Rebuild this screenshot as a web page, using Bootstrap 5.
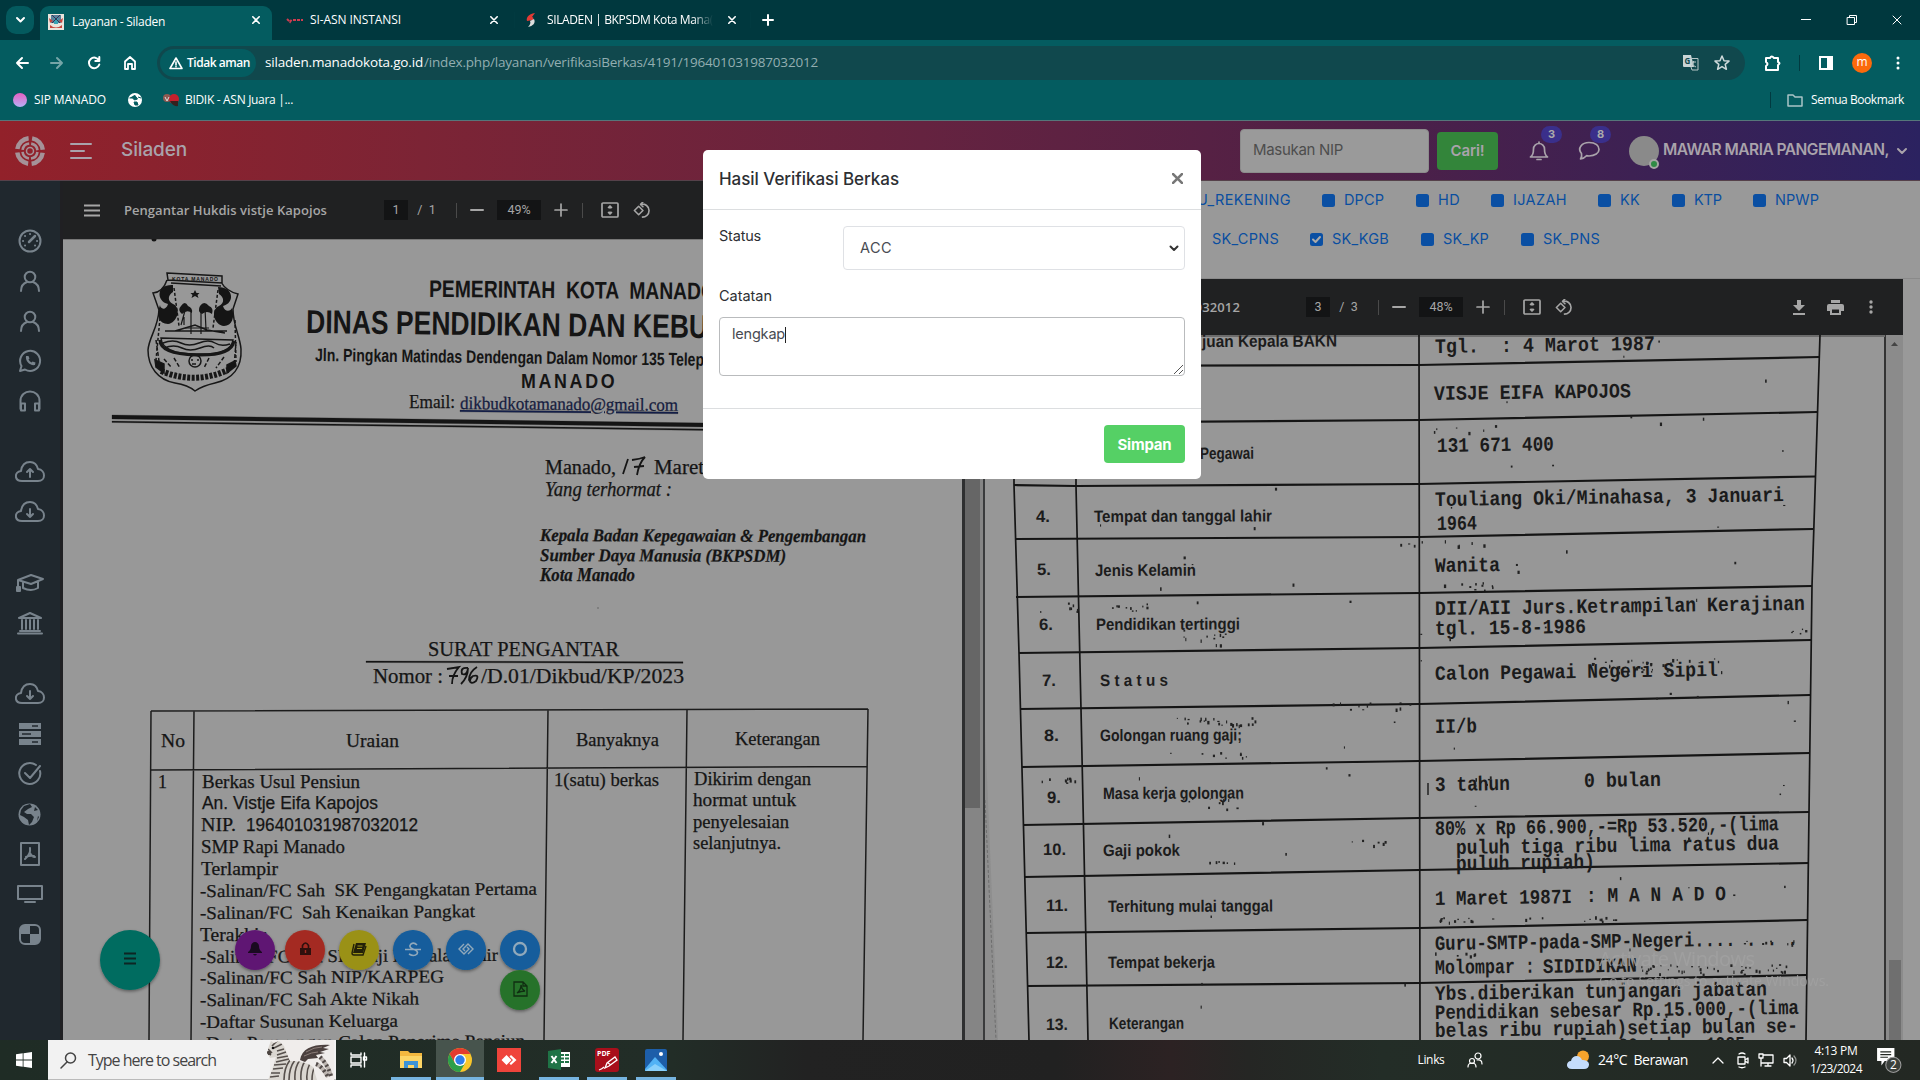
<!DOCTYPE html>
<html lang="id">
<head>
<meta charset="utf-8">
<title>Layanan - Siladen</title>
<link href="https://cdn.jsdelivr.net/npm/bootstrap@5.3.0/dist/css/bootstrap.min.css" rel="stylesheet">
<style>
html,body{width:1920px;height:1080px;overflow:hidden;margin:0}
body{font-family:"Open Sans","Noto Sans",sans-serif;font-size:12px;line-height:1;background:#999;color:#fff}
svg{display:block;overflow:visible}
.ico{fill:none;stroke:currentColor;stroke-width:2;stroke-linecap:round;stroke-linejoin:round}
.gridbar{display:grid;align-items:center;justify-items:center}
.fitw{white-space:nowrap;justify-self:start}
.dlbox{width:1px;height:16px;background:#013a40}
/* browser window */
.tabstrip{height:40px;background:#00383e;grid-template-columns:40px 232px 14px 18px 178px 24px 16px 18px 180px 24px 13px 22px 1fr 48px 44px 46px}
.drop{width:28px;height:28px;border-radius:10px;background:#045a5e;margin-left:0}
.tab-on{width:232px;height:34px;align-self:end;background:#045c60;border-radius:9px 9px 0 0;grid-template-columns:32px 168px 32px;padding-bottom:2px}
.toolbar{height:45px;background:#045c60;grid-template-columns:5px 34px 36px 38px 34px 10px 1588px 48px 12px 42px 30px 42px}
.addr{height:34px;width:1588px;border-radius:17px;background:#10484d;grid-template-columns:3px 96px 9px 160px 400px 1fr 32px 32px 7px}
.chip{width:96px;height:28px;border-radius:14px;background:#045c60;grid-template-columns:27px 1fr}
.marks{height:35px;padding-bottom:5px;background:#045c60;grid-template-columns:6px 28px 78px 46px 25px 2px 1fr 18px 32px 109px}
.avt{width:20px;height:20px;border-radius:50%;background:#fb6a0c;display:grid;place-items:center;padding-bottom:2px}
/* application */
.apphead{height:61px;border-top:1px solid #56767a;border-bottom:1px solid #55414a;background:linear-gradient(90deg,#92212a 0,#7c2435 22%,#652340 48%,#4f2046 70%,#2b2260 100%);font-family:Inter,sans-serif;color:#a9a3ab;grid-template-columns:60px 61px 1119px 189px 8px 61px 21px 40px 10px 40px 20px 30px 4px 226px 26px}
.nip{width:189px;height:44px;background:#9a9a9a;border:1px solid #8c8c8c;border-radius:4px;color:#4d4d4d;font-size:15px;padding:12px}
.cari{width:61px;height:38px;background:#33853a;border-radius:4px;font-size:15px;font-weight:600}
.nbadge{position:absolute;left:12px;top:-15px;width:21px;height:17px;border-radius:9px;background:#3a2f8b;font-size:11px;font-weight:700;display:grid;place-items:center;color:#aaa}
.face{width:30px;height:30px;border-radius:50%;background:#8a8a8a;position:relative}
.face i{position:absolute;right:0;bottom:-3px;width:10px;height:10px;border-radius:50%;background:#2f8a45;border:2px solid #a5a5a5}
.work{height:859px}
.side{width:63px;background:linear-gradient(90deg,#20282e 60px,#202023 60px);padding:40px 4px 0 0;color:#78838c}
.side div{height:40px;display:grid;place-items:center}
.side .gap1{margin-top:31px}
.pdfbar{background:#202122;color:#a6a6a6;font-size:12.5px;font-family:Roboto,sans-serif}
.barL{width:899px;height:58px;grid-template-columns:61px 260px 24px 37px 22px 20px 64px 20px 22px 34px 28px 1fr}
.barR{width:918px;height:56px;grid-template-columns:255px 66px 24px 37px 22px 20px 64px 20px 22px 34px 28px 1fr 36px 36px 36px 14px}
.pg{background:#131415;width:24px;height:20px;display:grid;place-items:center}
.zm{background:#131415;width:44px;height:20px;display:grid;place-items:center}
.vl{width:1px;height:15px;background:#4a4a4a}
.ttl{font-weight:600;font-size:13px;font-family:"Open Sans",sans-serif}
.paneL{width:899px}
.gutter{width:23px;background:#858585;border-left:3px solid #2e2f30;border-right:2px solid #3a3b3c;padding-right:3px}
.thumb{width:15px;height:627px;background:#666}
.files{height:98px;background:#999;border-bottom:1px solid #8a8a8a;color:#0a4ea0;font-family:Inter,sans-serif;font-size:14.5px;padding-top:12px}
.rowA{grid-template-columns:181px 156px 22px 72px 22px 53px 22px 85px 22px 52px 22px 59px 22px 60px;justify-content:start;height:14px;margin-bottom:25px}
.rowB{grid-template-columns:227px 83px 15px 22px 89px 22px 78px 22px 60px;justify-content:start;height:14px}
.cb{width:13px;height:13px;border-radius:2.5px;background:#0a4fa3;justify-self:start}
/* dialog */
.dlg{position:absolute;left:703px;top:150px;width:498px;height:329px;background:#fff;border-radius:5px;font-family:Inter,sans-serif;color:#2d2f33;border:0}
.dlg .hd{height:60px;border-bottom:1px solid #dcdee0;padding:0 17px 0 16px}
.dlg .hd .fitw{font-size:17px;font-weight:500}
.dlg .bd{height:198px;padding:16px 16px 0;font-size:14.5px}
.selbox{width:342px;height:44px;border:1px solid #dfe1e5;border-radius:4px;padding:0 5px 0 16px;color:#484b52}
.txt{height:59px;border:1px solid #b9bbbd;border-radius:4px;padding:9px 12px;position:relative;color:#484b52}
.caret{width:1px;height:16px;background:#222}
.ft{height:71px;border-top:1px solid #dcdee0;padding:16px}
.save{width:81px;height:38px;border-radius:4px;background:#55d065;color:#fff;font-weight:700;font-size:15px}
.fabs{position:absolute;left:100px;top:925px}
/* taskbar */
.task{height:40px;background:linear-gradient(90deg,#1f2c25 0,#222d27 35%,#222 42%,#212121 55%,#2c2223 61%,#252624 65%,#232d27 72%,#232823 100%);grid-template-columns:48px 288px 46px 9px 40px 5px 48px 5px 40px 10px 40px 8px 40px 9px 40px 727px 56px 34px 68px 36px 106px 26px 23px 24px 20px 68px 46px}
.find{width:288px;height:40px;background:#f2f2f2;color:#444;display:grid;grid-template-columns:40px 170px 8px 70px;align-items:center;border-bottom:1px solid #bbb}
.app{width:100%;height:40px;display:grid;place-items:center;border-bottom:3px solid #76b4e0;padding-top:2px}
.app.off{border-color:transparent}
.app.on{background:#47544d}
.clk{font-size:12px;text-align:center;line-height:18px;margin-left:12px}
/* scanned pages */
.sr{font-family:"Liberation Serif",serif;font-size:18px;stroke:#151515;stroke-width:.25px}
.hv{font-family:"Liberation Sans",sans-serif;font-weight:700}
.lb{font-family:"Liberation Sans",sans-serif;font-size:16.5px;font-weight:700;fill:#1c1c1c}
.tw{font-family:"Liberation Mono",monospace;font-size:20.5px;font-weight:700;fill:#1b1b1b}
</style>
<script src="https://cdn.jsdelivr.net/npm/bootstrap@5.3.0/dist/js/bootstrap.bundle.min.js"></script>
</head>
<body class="d-flex flex-column">
<svg width="0" height="0" class="position-absolute">
<defs>
<symbol id="x" viewBox="0 0 10 10"><path d="M1 1l8 8M9 1l-8 8"/></symbol>
<symbol id="user" viewBox="0 0 20 22"><circle cx="10" cy="7" r="5.3"/><path d="M1 21c0-5 3-8 6-9M19 21c0-5-3-8-6-9"/></symbol>
<symbol id="cloud" viewBox="0 0 30 22"><path d="M7 20c-8 0-8-9-1-10C7 3 11 1 15 1s7 3 8 7c8 1 8 12 0 12z"/></symbol>
<symbol id="fit" viewBox="0 0 18 16"><rect x="1" y="1" width="16" height="14" rx="1"/><path d="M9 4.500v1.500M9 10v1.500M7.500 5.500L9 4l1.500 1.500M7.500 10.500L9 12l1.500-1.500"/></symbol>
<symbol id="rot" viewBox="0 0 18 18"><path d="M6 4.500L1.500 9 6 13.500 10.500 9zM8 2.500c5-1 9 2 9 6.500s-3.500 7-7 7M10.500 0L8 2.500 10.500 5"/></symbol>
</defs></svg>

<header>
 <div class="gridbar tabstrip">
  <div class="drop d-grid" style="place-items:center"><svg class="ico" width="9" height="6" viewBox="0 0 9 6"><path d="M1 1l3.500 3.500L8 1"/></svg></div>
  <div class="gridbar tab-on">
   <svg width="16" height="16" viewBox="0 0 16 16"><path fill="#e9e4dc" d="M0 0h16v16H0z"/><path fill="#5a7f9a" d="M3 1h10v8H3z"/><path fill="#c8453c" d="M1 4l4 3-3 2zM15 4l-4 3 3 2zM2 11q6 5 12 0v3H2z"/><path fill="#3aa2b4" d="M6 4h4v6H6z"/><path d="M4 1l8 8M12 1L4 9" stroke="#335"/></svg>
   <span class="fitw" data-w="93">Layanan - Siladen</span>
   <svg class="ico" width="8" height="8" style="margin-top:-4px"><use href="#x"/></svg>
  </div>
  <span></span>
  <svg width="16" height="5"><path d="M0 1l3 3 2-3M6 2h10" stroke="#d03c50" stroke-width="2" stroke-dasharray="3 1" fill="none"/></svg>
  <span class="fitw ps-1" data-w="91" style="margin-left:2px">SI-ASN INSTANSI</span>
  <svg class="ico" width="8" height="8"><use href="#x"/></svg>
  <span class="dlbox"></span>
  <svg width="12" height="16" viewBox="0 0 12 16"><path d="M10 1C3 2 1 6 2 9l6-1c1-2 0-3-1-3z" fill="#e33b35"/><path d="M3 15c5-1 8-4 6-8L5 9c1 2 0 4-2 6z" fill="#ddd"/></svg>
  <span class="fitw" data-w="166" style="margin-left:7px;-webkit-mask:linear-gradient(90deg,#000 88%,transparent)">SILADEN | BKPSDM Kota Mana(</span>
  <svg class="ico" width="8" height="8"><use href="#x"/></svg>
  <span class="dlbox"></span>
  <svg class="ico" width="10" height="10"><path d="M5 0v10M0 5h10"/></svg>
  <span></span>
  <svg width="10" height="2"><path fill="#fff" d="M0 0h10v1H0z"/></svg>
  <svg class="ico" width="10" height="10" style="stroke-width:1"><path d="M.5 2.500h7v7h-7zM2.500 2.500v-2h7v7h-2"/></svg>
  <svg class="ico" width="10" height="10" style="stroke-width:1"><use href="#x"/></svg>
 </div>
 <div class="gridbar toolbar">
  <span></span>
  <svg class="ico" width="12" height="12"><path d="M12 6H1M6 1L1 6l5 5"/></svg>
  <svg class="ico" width="12" height="12" opacity=".45"><path d="M0 6h11M6 1l5 5-5 5"/></svg>
  <svg class="ico" width="12" height="12"><path d="M11 3.500A5.300 5.300 0 1 0 11.300 7.500M11.300 0v4h-4"/></svg>
  <svg class="ico" width="12" height="14" style="stroke-width:1.800"><path d="M1 5.500L6 1l5 4.500V13H8V8H4v5H1z"/></svg>
  <span></span>
  <div class="gridbar addr">
   <span></span>
   <div class="gridbar chip"><svg class="ico ms-1" width="14" height="12" style="stroke-width:1.600"><path d="M7 1l6 10.500H1zM7 5v3M7 9.500v.3"/></svg><span class="fitw fw-semibold" data-w="63">Tidak aman</span></div>
   <span></span>
   <span class="fitw" data-w="158" style="font-size:13.500px">siladen.manadokota.go.id</span>
   <span class="fitw" data-w="394" style="font-size:13.500px;color:#93aeb1;margin-left:-1px">/index.php/layanan/verifikasiBerkas/4191/196401031987032012</span>
   <span></span>
   <svg width="17" height="17" viewBox="0 0 17 17"><path fill="#c9d5d6" d="M1 1h8l3 12H2q-1 0-1-1z"/><path d="M7 4.500h9v11.500H10l-1-3" fill="none" stroke="#b5c5c6"/><text x="2.500" y="9.500" font-size="8" font-weight="700" fill="#10484d">G</text><path d="M9 8h5M11.500 7v1q0 3-2.500 4M10 9q1 3 4 4" stroke="#b5c5c6" fill="none"/></svg>
   <svg class="ico" width="16" height="15" viewBox="0 0 16 15" style="stroke-width:1.500;color:#cfdadb"><path d="M8 1l2 4.700 5 .4-3.800 3.300 1.200 4.900L8 11.600l-4.400 2.700 1.200-4.900L1 6.100l5-.4z"/></svg>
   <span></span>
  </div>
  <svg class="ico" width="16" height="16" style="margin-left:8px"><path d="M1 3h4q1.500-3 4 0h4v4q3 1 0 3v5H1v-4q3-2 0-4z"/></svg>
  <span class="dlbox"></span>
  <svg width="14" height="14"><path d="M1 1h12v12H1z" fill="none" stroke="#fff" stroke-width="2"/><path d="M8 1h5v12H8z" fill="#fff"/></svg>
  <span class="avt">m</span>
  <svg width="4" height="14" fill="#fff"><circle cx="2" cy="2" r="1.500"/><circle cx="2" cy="7" r="1.500"/><circle cx="2" cy="12" r="1.500"/></svg>
 </div>
 <div class="gridbar marks">
  <span></span>
  <svg width="14" height="14"><defs><linearGradient id="pk" x2="0" y2="1"><stop stop-color="#e55fc2"/><stop offset="1" stop-color="#b7b0f5"/></linearGradient></defs><circle cx="7" cy="7" r="7" fill="url(#pk)"/></svg>
  <span class="fitw" data-w="72">SIP MANADO</span>
  <svg width="14" height="14"><circle cx="7" cy="7" r="7" fill="#fff"/><path d="M1.500 5h3l2 2 3-1-3-4M6 9h3l1 3-3 0zM10 4l3 1" stroke="#045c60" fill="#045c60"/></svg>
  <svg width="16" height="14"><circle cx="4" cy="5" r="4" fill="#8d5a52"/><circle cx="11" cy="6" r="5" fill="#c4202c"/><path d="M7 8h8v5q-5 1-8-5z" fill="#33211f"/><path d="M2 4l2 4 2-4" stroke="#ddd" fill="none"/></svg>
  <span></span>
  <span class="fitw" data-w="108">BIDIK - ASN Juara |...</span>
  <span class="dlbox"></span>
  <svg class="ico" width="16" height="13" style="stroke-width:1.500;color:#a9c4c6"><path d="M1 1h5l2 2h7v9H1z"/></svg>
  <span class="fitw" data-w="93">Semua Bookmark</span>
 </div>
</header>

<nav class="gridbar apphead">
 <svg width="30" height="30" viewBox="-15 -15 30 30" fill="none" stroke="#a59298"><circle r="12.800" stroke-width="4.500" stroke-dasharray="16.500 3.600" stroke-dashoffset="-1.800"/><circle r="7.500" stroke-width="2.600" stroke-dasharray="9.700 2.080" stroke-dashoffset="-1"/><circle r="3.500" stroke-width="1.500"/></svg>
 <svg class="ico" width="22" height="18" style="margin-left:-20px"><path d="M1 2h20M1 9h13M1 16h20"/></svg>
 <span class="fitw fw-medium" data-w="66" style="font-size:19px;margin-top:-3px">Siladen</span>
 <div class="nip"><span class="fitw d-inline-block" data-w="90">Masukan NIP</span></div>
 <span></span>
 <div class="cari d-flex align-items-center justify-content-center"><span class="fitw" data-w="34">Cari!</span></div>
 <span></span>
 <div class="position-relative"><svg class="ico" width="20" height="20" viewBox="0 0 20 20" style="stroke-width:1.700"><path d="M1.500 16c3-2 3-5 3-8S7 2.500 10 2.500 15.500 5 15.500 8s0 6 3 8zM10 1v1M8 18.500h4"/></svg><span class="nbadge">3</span></div>
 <span></span>
 <div class="position-relative"><svg class="ico" width="22" height="19" viewBox="0 0 22 19" style="stroke-width:1.700"><path d="M3.500 12.500C-1 7 4 1.500 11 1.500S21 5 21 8.500 17 15 11 15l-2.500-.3Q6 17.500 2.500 18q1.700-2 1-5.500z"/></svg><span class="nbadge">8</span></div>
 <span></span>
 <div class="face"><i></i></div>
 <span></span>
 <span class="fitw fw-semibold" data-w="226" style="font-size:15.500px;margin-top:-1px">MAWAR MARIA PANGEMANAN,</span>
 <svg class="ico" width="10" height="6"><path d="M1 1l4 4 4-4"/></svg>
</nav>

<main class="d-flex work">
 <aside class="side">
  <div><svg class="ico" width="24" height="24" viewBox="0 0 24 24"><circle cx="12" cy="12" r="10.500"/><path d="M11 13l6-6" stroke-width="2.500"/><path d="M5 12h.1M7 7h.1M12 5h.1M19 12h.1M7 16.500h.1M17 16.500h.1"/></svg></div>
  <div><svg class="ico" width="20" height="22"><use href="#user"/></svg></div>
  <div><svg class="ico" width="20" height="22"><use href="#user"/></svg></div>
  <div><svg class="ico" width="24" height="24"><path d="M2 22l1.500-5A10 10 0 1 1 7 20.500z"/><path d="M8 7c-1 5 4 10 9 9l.500-2.500-3-1-1 1q-2-1-3-3l1-1-1-2.500z" fill="currentColor" stroke="none"/></svg></div>
  <div><svg class="ico" width="22" height="22"><path d="M1.500 19v-8C1.500 5 6 1.500 11 1.500S20.500 5 20.500 11v8M2 13.500h4v7H2zM16 13.500h4v7h-4z"/></svg></div>
  <div class="gap1"><svg class="ico" width="30" height="22"><use href="#cloud"/><path d="M15 16V8M12 11l3-3 3 3"/></svg></div>
  <div><svg class="ico" width="30" height="22"><use href="#cloud"/><path d="M15 8v8M12 13l3 3 3-3"/></svg></div>
  <div class="gap1"><svg class="ico" width="28" height="20"><path d="M2 7l13-5 12 4-12 5zM7 9v6q8 4 15 0V8M2 7v10" /><path d="M1 14h3v4H1z"/></svg></div>
  <div><svg class="ico" width="26" height="24"><path d="M2 7l11-5 11 5zM3 20h20M1 22.500h24M5 9v9M9 9v9M13 9v9M17 9v9M21 9v9"/></svg></div>
  <div class="gap1"><svg class="ico" width="30" height="22"><use href="#cloud"/><path d="M15 8v8M12 13l3 3 3-3"/></svg></div>
  <div><svg width="22" height="22" fill="currentColor"><path d="M0 0h22v6H0zM0 8h22v6H0zM0 16h22v6H0z"/><path d="M13 3h6M3 11h9M13 19h6" stroke="#20282e" stroke-width="1.500"/></svg></div>
  <div><svg class="ico" width="24" height="24"><path d="M22 9a10.500 10.500 0 1 1-4-6M7 11l5 5L22 4"/></svg></div>
  <div><svg width="23" height="23"><circle cx="11.500" cy="11.500" r="11" fill="currentColor"/><path d="M12 1l2 3-4 2-4 3 3 2 4 0 3 3-2 5-3 3-1-5-4-3-4-2 1-5 3-4zM17 4l3 3-4 1zM20 13l1 1-2 4z" fill="#20282e"/></svg></div>
  <div><svg class="ico" width="20" height="24"><path d="M1 1h18v22H1zM10 6q1 6-5 11M10 11q2 4 5 4M6 15q4-2 8-1"/></svg></div>
  <div><svg class="ico" width="26" height="18"><path d="M1 1h24v13H1zM8 17h10"/></svg></div>
  <div><svg width="22" height="21"><rect x="1" y="1" width="20" height="19" rx="5" fill="none" stroke="currentColor" stroke-width="2"/><path d="M6 1h5v9H1V6q0-5 5-5zM11 10h10v5q0 5-5 5h-5z" fill="currentColor"/></svg></div>
 </aside>

 <section class="paneL">
  <div class="gridbar pdfbar barL">
   <svg class="ico me-1" width="16" height="13" style="stroke-linecap:butt"><path d="M0 1.500h16M0 6.500h16M0 11.500h16"/></svg>
   <span class="fitw ttl" data-w="203">Pengantar Hukdis vistje Kapojos</span>
   <span class="pg">1</span><span>/ &nbsp;1</span><span class="vl"></span>
   <svg class="ico" width="12" height="2"><path d="M0 1h12"/></svg><span class="zm">49%</span>
   <svg class="ico" width="12" height="12"><path d="M6 0v12M0 6h12" stroke-width="1.700"/></svg><span class="vl"></span>
   <svg class="ico" width="18" height="16" style="stroke-width:1.700"><use href="#fit"/></svg>
   <svg class="ico" width="17" height="17" style="stroke-width:1.700"><use href="#rot"/></svg><span></span>
  </div>
  <svg width="899" height="801" viewBox="63 239 899 801" fill="#151515" style="overflow:hidden">
   <path fill="#989898" d="M63 239h899v801H63z"/>
   <path d="M63 239h899v1H63z" fill="#777"/><circle cx="154" cy="239" r="2.500"/>
   <g fill="none" stroke="#171717" stroke-width="1.500">
    <path d="M167 273l55 3v7l-54-3zM167 280q-4 12-14 13l6 17c-1 18-10 27-11 40 0 17 10 30 27 33q13 2 20 8 7-5 20-8c18-4 27-16 26-34-1-13-8-23-8-40l5-15q-12-3-17-12"/>
    <path d="M171 283l50 3M161 338l72 2q-2 15-36 14-35 0-36-16zM163 343q10-4 18 0t18 0 16 0 15 1M164 348q10-4 18 0t18 0 14 0M175 331l20-6 12 5 18 3M165 331h62"/>
    <path d="M184 325v-8M181 325l5-18M206 330l-1-22M191 312v22M201 312v22M185 328h24" stroke-width="1.200"/><path d="M174 288l5 38M218 290l-5 38M160 318l-4 42M235 320l1 42" stroke-dasharray="3 2"/><circle cx="195" cy="361" r="6"/><path d="M191 360h2M197 360h2M192 364h6M164 359l8 9M174 358l6 10M209 358l-5 10M224 357l-8 11M156 340l4 28M236 342l-2 25" stroke-dasharray="4 2"/>
    <path d="M161 371q34 14 67-1" stroke-width="6" stroke-dasharray="3 1.500"/><path d="M160 340q0 14 36 15t38-14" stroke-width="3"/>
    <path d="M155 360l9 4v9l-8-6zM235 361l-8 4v8l9-7z" fill="#151515"/>
   </g>
   <path d="M173 285c-17-1-17 16-5 19-2 7-8 5-8 1-4 10-1 19 8 19 9-1 14-16 5-20-6-3-5-9 0-12zM218 287c16 0 17 16 5 19 2 7 8 5 9 2 3 9 0 18-8 18-10-1-14-16-5-20 6-3 5-9 0-12zM181 306q4-6 7 0 5 2 4 7-5-4-10 1-5-4-1-8zM200 306q4-6 9 0 5 2 3 8-5-4-10 0-5-3-2-8zM195 290l1.500 3h3l-2 2 1 3-3.500-2-3.500 2 1-3-2-2h3z"/>
   <text x="172" y="281" class="hv" font-size="5" textLength="46">KOTA MANADO</text>
   <g class="hv">
   <text x="429" y="297" font-size="24" transform="rotate(.5 429 297)" textLength="287" lengthAdjust="spacingAndGlyphs" xml:space="preserve">PEMERINTAH  KOTA  MANADO</text>
   <text x="306" y="333" font-size="33" transform="rotate(.7 306 333)" textLength="402" lengthAdjust="spacingAndGlyphs">DINAS PENDIDIKAN DAN KEBU</text>
   <text x="315" y="361" font-size="18" transform="rotate(.7 315 361)" textLength="389" lengthAdjust="spacingAndGlyphs">Jln. Pingkan Matindas Dendengan Dalam Nomor 135 Telep</text>
   <text x="613" y="388" font-size="21" textLength="110" transform="scale(.85 1)">MANADO</text></g>
   <g class="sr">
   <text x="409" y="408" textLength="46" lengthAdjust="spacingAndGlyphs">Email:</text>
   <text x="460" y="409" fill="#14204e" text-decoration="underline" transform="rotate(.5 460 409)" textLength="218" lengthAdjust="spacingAndGlyphs">dikbudkotamanado@gmail.com</text>
   <path d="M112 415l594 8v4l-594-8zM112 421l594 8v1.500l-594-8z"/>
   <text x="545" y="474" font-size="20" textLength="71" lengthAdjust="spacingAndGlyphs">Manado,</text>
   <path d="M628 459l-5 15M632 460q8-1 13-3-6 6-8 18M634 467l10-1" fill="none" stroke-width="1.800"/>
   <text x="654" y="474" font-size="20" textLength="50" lengthAdjust="spacingAndGlyphs">Maret</text>
   <text x="545" y="496" font-size="20" font-style="italic" textLength="127" lengthAdjust="spacingAndGlyphs">Yang terhormat :</text>
   <g font-style="italic" font-weight="700" font-size="18">
   <text x="540" y="541" textLength="326" transform="rotate(.2 540 540)" lengthAdjust="spacingAndGlyphs">Kepala Badan Kepegawaian &amp; Pengembangan</text>
   <text x="540" y="561" textLength="246" transform="rotate(.2 540 560)" lengthAdjust="spacingAndGlyphs">Sumber Daya Manusia (BKPSDM)</text>
   <text x="540" y="581" textLength="95" lengthAdjust="spacingAndGlyphs">Kota Manado</text></g>
   <text x="428" y="656" font-size="21" textLength="191" lengthAdjust="spacingAndGlyphs">SURAT PENGANTAR</text>
   <path d="M366 661l317 .8v1.500l-317-.8z"/>
   <text x="373" y="683" font-size="20" textLength="70" lengthAdjust="spacingAndGlyphs">Nomor :</text>
   <path d="M447 669l12-2q-7 8-7 17M449 676h9M468 668q-8-1-6 6 5 2 6-6 0 9-7 16M477 667q-8 5-8 13 2 5 7 1 4-7-3-5-3 2-3 5" fill="none" stroke-width="1.800"/>
   <text x="481" y="683" font-size="20" textLength="203" lengthAdjust="spacingAndGlyphs">/D.01/Dikbud/KP/2023</text>
   <path d="M151 711L868 709M151 770L867 766.500M151 711L149 1040M194 711L191 1040M548 710L544 1040M687 710L683 1040M868 709L863 1040" stroke="#1c1c1c" stroke-width="1.500" fill="none"/>
   <text x="161" y="747" textLength="24" lengthAdjust="spacingAndGlyphs">No</text><text x="346" y="747" textLength="53" lengthAdjust="spacingAndGlyphs">Uraian</text><text x="576" y="746" textLength="83" lengthAdjust="spacingAndGlyphs">Banyaknya</text><text x="735" y="745" textLength="85" lengthAdjust="spacingAndGlyphs">Keterangan</text>
   <text x="158" y="788">1</text>
   <text x="202" y="788" textLength="158" lengthAdjust="spacingAndGlyphs">Berkas Usul Pensiun</text>
   <text x="202" y="809" font-family="Liberation Sans" font-size="17.500" textLength="176" lengthAdjust="spacingAndGlyphs">An. Vistje Eifa Kapojos</text>
   <text x="201" y="831" textLength="35" lengthAdjust="spacingAndGlyphs">NIP.</text><text x="246" y="831" font-family="Liberation Sans" font-size="17.500" textLength="172" lengthAdjust="spacingAndGlyphs">196401031987032012</text>
   <text x="201" y="853" textLength="144" lengthAdjust="spacingAndGlyphs">SMP Rapi Manado</text>
   <text x="201" y="875" textLength="77" lengthAdjust="spacingAndGlyphs">Terlampir</text>
   <text x="200" y="897" textLength="337" transform="rotate(-.4 200 897)" lengthAdjust="spacingAndGlyphs" xml:space="preserve">-Salinan/FC Sah  SK Pengangkatan Pertama</text>
   <text x="200" y="919" textLength="275" transform="rotate(-.4 200 919)" lengthAdjust="spacingAndGlyphs" xml:space="preserve">-Salinan/FC  Sah Kenaikan Pangkat</text>
   <text x="200" y="941" textLength="66" lengthAdjust="spacingAndGlyphs">Terakhir</text>
   <text x="200" y="963" textLength="298" transform="rotate(-.4 200 963)" lengthAdjust="spacingAndGlyphs">-Salinan/FC Sah SK Gaji Berkala Akhir</text>
   <text x="200" y="984" textLength="244" transform="rotate(-.4 200 984)" lengthAdjust="spacingAndGlyphs">-Salinan/FC Sah NIP/KARPEG</text>
   <text x="200" y="1006" textLength="219" transform="rotate(-.4 200 1006)" lengthAdjust="spacingAndGlyphs">-Salinan/FC Sah Akte Nikah</text>
   <text x="200" y="1028" textLength="198" transform="rotate(-.4 200 1028)" lengthAdjust="spacingAndGlyphs">-Daftar Susunan Keluarga</text>
   <text x="200" y="1049" textLength="325" transform="rotate(-.4 200 1049)" lengthAdjust="spacingAndGlyphs">-Data Perorangan Calon Penerima Pensiun</text>
   <text x="554" y="786" textLength="105" lengthAdjust="spacingAndGlyphs">1(satu) berkas</text>
   <text x="694" y="785" textLength="117" lengthAdjust="spacingAndGlyphs">Dikirim dengan</text><text x="693" y="806" textLength="103" lengthAdjust="spacingAndGlyphs">hormat untuk</text><text x="693" y="828" textLength="96" lengthAdjust="spacingAndGlyphs">penyelesaian</text><text x="693" y="849" textLength="88" lengthAdjust="spacingAndGlyphs">selanjutnya.</text>
   </g>
   <circle cx="598" cy="608" r="1" fill="#777"/>
  </svg>
 </section>

 <div class="gutter d-flex justify-content-center"><div class="thumb"></div></div>

 <section class="flex-fill">
  <div class="files">
   <div class="gridbar rowA">
    <span></span><span class="fitw" data-w="125">BUKU_REKENING</span>
    <i class="cb"></i><span class="fitw" data-w="40">DPCP</span><i class="cb"></i><span class="fitw" data-w="22">HD</span><i class="cb"></i><span class="fitw" data-w="54">IJAZAH</span><i class="cb"></i><span class="fitw" data-w="20">KK</span><i class="cb"></i><span class="fitw" data-w="28">KTP</span><i class="cb"></i><span class="fitw" data-w="44">NPWP</span>
   </div>
   <div class="gridbar rowB">
    <span></span><span class="fitw" data-w="67">SK_CPNS</span><span></span>
    <svg class="ico" width="13" height="13" style="justify-self:start"><rect width="13" height="13" rx="2.500" fill="#0a4fa3" stroke="none"/><path d="M3 6.500L5.500 9 10 4" stroke="#aaa"/></svg><span class="fitw" data-w="57">SK_KGB</span><i class="cb"></i><span class="fitw" data-w="46">SK_KP</span><i class="cb"></i><span class="fitw" data-w="57">SK_PNS</span>
   </div>
  </div>
  <div class="gridbar pdfbar barR">
   <span class="fitw ttl" data-w="190" style="justify-self:end">SK_KGB_196401031987032012</span><span></span>
   <span class="pg">3</span><span>/ &nbsp;3</span><span class="vl"></span>
   <svg class="ico" width="12" height="2"><path d="M0 1h12"/></svg><span class="zm">48%</span>
   <svg class="ico" width="12" height="12"><path d="M6 0v12M0 6h12" stroke-width="1.700"/></svg><span class="vl"></span>
   <svg class="ico" width="18" height="16" style="stroke-width:1.700"><use href="#fit"/></svg>
   <svg class="ico" width="17" height="17" style="stroke-width:1.700"><use href="#rot"/></svg><span></span>
   <svg width="12" height="15" fill="currentColor"><path d="M4 0h4v5h4l-6 6-6-6h4zM0 13h12v2H0z"/></svg>
   <svg width="17" height="15" fill="currentColor"><path d="M4 0h9v3H4zM2 4h13q2 0 2 2v5h-3v4H3v-4H0V6q0-2 2-2z"/><path d="M5 9.500h7V13H5z" fill="#202122"/></svg>
   <svg width="4" height="14" fill="currentColor"><circle cx="2" cy="2" r="1.700"/><circle cx="2" cy="7" r="1.700"/><circle cx="2" cy="12" r="1.700"/></svg><span></span>
  </div>
  <svg width="918" height="705" viewBox="985 335 918 705" style="overflow:hidden">
   <path fill="#979797" d="M985 335h918v705H985z"/><path fill="#8b8b8b" d="M1886 335h17v705h-17z"/><path d="M1884 335h2v705h-2z" fill="#333"/><path d="M1889 960h12v80h-12z" fill="#6f6f6f"/><path d="M1891 346l3.500-4 3.500 4z" fill="#444"/>
   <path d="M985 335h900v2H985z" fill="#6c6c6c"/>
   <path d="M985 730l13 310h-13z" fill="#8e8e8e"/><path d="M985 800l11 240" stroke="#6d6d6d" stroke-dasharray="3 2"/>
   <g fill="none" stroke="#151515" stroke-width="2.200">
    <path d="M1014 366L1419 365 1819 357M1014 423L1419 420 1817 412M1014 485L1076 486 1419 484 1815 476.500M1015 539L1419 537 1813 529M1016 597L1419 593 1812 586M1019 653L1419 648 1811 640M1020 709L1419 704 1810 695M1022 767L1419 761 1810 753M1023 825L1419 818 1809 812M1024 877L1419 870 1809 863M1026 933L1419 928 1807 920M1027 986L1419 983 1806 975"/>
    <path d="M1014 335L1014 485 1019 653 1029 1040M1076 335L1076 486 1081 709 1088 1040M1419 335L1420 1040M1820 335L1812 586 1806 1040" stroke-width="1.700"/>
   </g>
   <g class="lb" id="labels"></g>
   <g class="tw" id="typed"></g>
   <g id="specks" fill="#222"></g>
   <path d="M1428 783v12" stroke="#222" stroke-width="1.500" fill="none"/>
   <g font-family="Open Sans" fill="#a2a2a2" opacity=".8"><text x="1599" y="966" font-size="20" textLength="156">Activate Windows</text><text x="1599" y="986" font-size="14" textLength="230">Go to Settings to activate Windows.</text></g>
  </svg>
 </section>
</main>

<footer class="gridbar task">
 <svg width="16" height="16" fill="#fff"><path d="M0 2.300l6.700-1v6.300H0zM7.500 1.200L16 0v7.600H7.500zM0 8.400h6.700v6.300L0 13.700zM7.500 8.400H16V16l-8.500-1.200z"/></svg>
 <div class="find">
  <svg class="ico mx-auto" width="17" height="17" style="stroke-width:1.500"><circle cx="10.500" cy="6" r="5"/><path d="M7 10l-6 6"/></svg>
  <span class="fitw" data-w="128" style="font-size:16px">Type here to search</span><span></span>
  <svg width="68" height="40" viewBox="0 0 68 40" style="overflow:hidden">
   <defs><clipPath id="zb"><path d="M1 13L3 6 5 1l3 2 5-2 5 5 6 15c8 0 17 1 23 6l4 13H2l4-10 4-13-6 1z"/></clipPath></defs>
   <path d="M4 40h64V0H4z" fill="#f0edeb"/>
   <path d="M34 20C36 8 48 4 64 5l-7 3 6 1-9 3 5 1-9 2 2 3-10 1-3 3z" fill="#4b403e"/><path d="M40 12q8-5 16-5M38 16q8-4 14-4" stroke="#8b7d78" fill="none"/>
   <path d="M54 17q8 8 11 19M50 24q6 2 12 13" stroke="#bdb6b1" stroke-width="4" fill="none"/><path d="M54 17q8 8 11 19M50 24q6 2 12 13" stroke="#514a48" stroke-width="4" stroke-dasharray="2 3" fill="none"/>
   <g clip-path="url(#zb)"><path d="M0 0h60v40H0z" fill="#dad6d0"/><path d="M12 0l-6 6M16 4l-8 4M18 9l-7 2M20 12l-9 3M22 16l-11 2M23 19l-13 3M20 24l-12 1M17 28l-10 1M14 33l-9 0M24 20q-6 8-6 20M29 20q-6 8-6 20M34 20q-6 8-5 20M39 21q-5 8-4 19M44 23q-4 8-3 17M49 26q-3 6-3 14M13 36l-9 1M2 9l4 4M1 12l4 3" stroke="#57504c" stroke-width="1.600" fill="none"/><circle cx="7" cy="8" r="1.300" fill="#111"/><path d="M0 11h5v4H0z" fill="#4c4541"/></g>
  </svg>
 </div>
 <svg class="ico" width="18" height="16" style="stroke-width:1.400"><path d="M1 1v2h10V1M1 15v-2h10v2M1 5h10v6H1zM14.500 1v14M13.500 5h3v3h-3z"/></svg>
 <span></span>
 <div class="app"><svg width="22" height="19"><path d="M0 1h8l2 2h12v15H0z" fill="#f3b83f"/><path d="M0 6h22v12H0z" fill="#fcd566"/><path d="M4 18v-7h14v7h-4v-3H8v3z" fill="#3c93d6"/></svg></div>
 <span></span>
 <div class="app on"><svg width="24" height="24" viewBox="-12 -12 24 24"><circle r="12" fill="#f9c62b"/><path d="M-10.400-6A12 12 0 0 1 10.400-6L0-6 -5.200 3z" fill="#e33b2e"/><path d="M-10.400-6A12 12 0 0 0 0 12L5.200 3-5.200 3z" fill="#2c9f4b"/><circle r="6" fill="#fff"/><circle r="4.700" fill="#2f7de9"/></svg></div>
 <span></span>
 <div class="app off"><svg width="24" height="24"><path d="M0 0h24v24H0z" fill="#ef443b"/><path d="M9.500 7l5 5-5 5-5-5zM14 7l5.500 5L14 17l-1.500-1.500L16 12l-3.500-3.500z" fill="#fff"/></svg></div>
 <span></span>
 <div class="app"><svg width="22" height="21"><path d="M11 3h11v15H11z" fill="#fff"/><path d="M13 5h3v2h-3zM17 5h4v2h-4zM13 8.500h3v2h-3zM17 8.500h4v2h-4zM13 12h3v2h-3zM17 12h4v2h-4z" fill="#1f7346"/><path d="M0 2l13-2v21L0 19z" fill="#1f7346"/><path d="M3.500 7l5 7M8.500 7l-5 7" stroke="#fff" stroke-width="2"/></svg></div>
 <span></span>
 <div class="app"><svg width="24" height="24"><rect width="24" height="24" rx="3" fill="#a80f1b"/><text x="2" y="8" font-size="7" font-weight="700" fill="#fff">PDF</text><path d="M10 20l2-5 8-6 2 3-8 6zM4 22q3-1 5-3M13 15l3 2" stroke="#fff" stroke-width="1.300" fill="none"/></svg></div>
 <span></span>
 <div class="app"><svg width="22" height="22"><rect width="22" height="22" rx="2" fill="#1d5ea9"/><path d="M0 20L10 8l12 13v1H0z" fill="#52b2f5"/><path d="M0 22l10-7 12 7z" fill="#8ad0fb"/><circle cx="16" cy="5" r="2" fill="#fff"/></svg></div>
 <span></span>
 <span class="fitw" data-w="27" style="justify-self:center">Links</span>
 <svg class="ico" width="16" height="16" style="stroke-width:1.200;margin-left:-3px"><circle cx="11" cy="4" r="3"/><circle cx="5" cy="9" r="2.500"/><path d="M1 15q0-4 4-4t4 4M10 8q5-1 5 4"/></svg>
 <span></span>
 <svg width="26" height="20"><circle cx="17" cy="6.500" r="6" fill="#f5a32c"/><path d="M6 19c-7 0-6-8-1-8C6 5 14 4 16 10c9-1 9 9 2 9z" fill="#c4dcfb"/></svg>
 <span class="fitw" data-w="90" style="font-size:14px;white-space:pre;margin-left:1px">24°C  Berawan</span>
 <svg class="ico ms-1" width="12" height="7" style="stroke-width:1.300"><path d="M1 6l5-5 5 5"/></svg>
 <svg class="ico ms-1" width="12" height="16" style="stroke-width:1.300"><path d="M1 5h7v7H1zM8 8l3-2v5L8 9M2 2q3-2 6 0M2 15q3 1.500 6 0"/></svg>
 <svg class="ico ms-1" width="16" height="14" style="stroke-width:1.300"><path d="M5 2h10v8H4M1 1h4v4H1zM3 5v8M7 13h6M10 10v3"/></svg>
 <svg class="ico ms-2" width="15" height="13" style="stroke-width:1.300"><path d="M1 4.500h2.500L7 1v11L3.500 8.500H1zM9 4q2 2.500 0 5"/><path d="M11 2q4 4.500 0 9" opacity=".5"/></svg>
 <div class="clk"><span class="fitw" data-w="43">4:13 PM</span><br><span class="fitw" data-w="52">1/23/2024</span></div>
 <svg class="ms-1" width="26" height="26" viewBox="0 0 24 24"><path d="M1 1h16v12H8l-3 4v-4H1z" fill="#fff"/><path d="M4 4.500h10M4 7h10M4 9.500h7" stroke="#232823"/><circle cx="16" cy="16.500" r="7" fill="#3b403c" stroke="#999"/><text x="13" y="20.500" font-size="11" fill="#fff">2</text></svg>
</footer>

<svg class="fabs" width="445" height="95" viewBox="100 925 445 95">
 <defs><filter id="sh" x="-30%" y="-30%" width="160%" height="160%"><feDropShadow dx="0" dy="1.500" stdDeviation="1.500" flood-opacity=".4"/></filter></defs>
 <g filter="url(#sh)"><circle cx="130" cy="960" r="30" fill="#006c60"/><circle cx="255" cy="950" r="20" fill="#5f1673"/><circle cx="305" cy="950" r="20" fill="#a42c22"/><circle cx="359" cy="950" r="20" fill="#9a9118"/><circle cx="413" cy="950" r="20" fill="#135d9c"/><circle cx="466" cy="950" r="20" fill="#135d9c"/><circle cx="520" cy="950" r="20" fill="#135d9c"/><circle cx="520" cy="990" r="20" fill="#28722c"/></g>
 <path d="M124 953.500h12M124 958.500h12M124 963.500h12" stroke="#0d2523" stroke-width="2"/>
 <path d="M248 952q3-2 3-6c0-2 2-4 4-4s4 2 4 4q0 4 3 6v1h-14zM253 954h4q-2 3-4 0z" fill="#1a0a20"/>
 <path d="M300 948h11v7h-11z" fill="#30100d"/><path d="M302.500 948v-2.500q3-5 6 0v2.500" stroke="#30100d" stroke-width="1.600" fill="none"/><path d="M305.500 950v3" stroke="#a42c22" stroke-width="1.400"/>
 <path d="M356 943h10l-3 10h-10z" fill="#222008"/><path d="M354 944l-2 9q0 2 2 2h9l3-9" fill="none" stroke="#222008" stroke-width="1.400"/><path d="M357.500 946h5M357 948.500h5" stroke="#9a9118"/>
 <g fill="none" stroke="#91a9bb" stroke-width="1.700"><path d="M417 945q-3-3-6-1-3 3 2 5 6 2 4 5-3 3-8 0M405 949.500h16"/><path d="M464 944l-5 5 5 5 5-5-2-2M468 954l5-5-5-5-5 5 2 2" stroke-width="1.400"/><circle cx="520" cy="949" r="6" stroke-width="2.300"/></g>
 <path d="M514 982h9l4 4v10h-13zM523 982v4h4M517 993q4-3 4-8 1 5 4 6-4 0-8 2" fill="none" stroke="#102e12" stroke-width="1.300"/>
</svg>

<div class="modal-content dlg d-block">
 <div class="hd d-flex align-items-center justify-content-between"><span class="fitw" data-w="180">Hasil Verifikasi Berkas</span><svg class="ico" width="11" height="11" viewBox="0 0 10 10" style="color:#777;margin:-3px 1px 0 0;stroke-width:2.400"><use href="#x"/></svg></div>
 <div class="bd">
  <div class="d-flex justify-content-between"><span class="fitw" data-w="42" style="padding-top:3px">Status</span>
   <div class="selbox d-flex align-items-center justify-content-between"><span class="fitw" data-w="32">ACC</span><svg class="ico" width="10" height="7" style="color:#333"><path d="M1.500 1.500L5 5l3.500-3.500"/></svg></div></div>
  <div style="padding:19px 0 13px"><span class="fitw" data-w="53">Catatan</span></div>
  <div class="txt d-flex align-items-start"><span class="fitw" data-w="53">lengkap</span><span class="caret"></span><svg class="position-absolute" width="9" height="9" style="right:1px;bottom:1px"><path d="M0 9l9-9M5 9l4-4" stroke="#555"/></svg></div>
 </div>
 <div class="ft d-flex justify-content-end"><div class="save d-flex align-items-center justify-content-center"><span class="fitw" data-w="54">Simpan</span></div></div>
</div>

<script>
const ns='http://www.w3.org/2000/svg';
// rows: x, baseline, width, text
const labels=[[1036,522,14,'4.'],[1037,575,14,'5.'],[1039,630,14,'6.'],[1042,686,14,'7.'],[1044,741,15,'8.'],[1047,803,14,'9.'],[1043,855,23,'10.'],[1046,911,22,'11.'],[1046,968,22,'12.'],[1046,1030,22,'13.'],
[1202,347,135,'juan Kepala BAKN'],[1200,459,54,'Pegawai'],[1094,522,178,'Tempat dan tanggal lahir'],[1095,576,101,'Jenis Kelamin'],[1096,630,144,'Pendidikan tertinggi'],[1100,686,68,'S t a t u s'],[1100,741,142,'Golongan ruang gaji;'],[1103,799,141,'Masa kerja golongan'],[1103,856,77,'Gaji pokok'],[1108,912,165,'Terhitung mulai tanggal'],[1108,968,107,'Tempat bekerja'],[1109,1029,75,'Keterangan']];
const typed=[[1435,353,220,'Tgl.  : 4 Marot 1987'],[1434,400,197,'VISJE EIFA KAPOJOS'],[1437,452,117,'131 671 400'],[1435,506,349,'Touliang Oki/Minahasa, 3 Januari'],[1437,530,40,'1964'],[1435,572,65,'Wanita'],[1435,615,370,'DII/AII Jurs.Ketrampilan Kerajinan'],[1435,635,151,'tgl. 15-8-1986'],[1435,680,283,'Calon Pegawai Negeri Sipil'],[1435,733,42,'II/b'],[1435,791,75,'3 tahun'],[1584,787,77,'0 bulan'],[1435,835,344,'80% x Rp 66.900,-=Rp 53.520,-(lima'],[1456,854,323,'puluh tiga ribu lima ratus dua'],[1456,870,139,'puluh rupiah)'],[1435,905,137,'1 Maret 1987I'],[1586,902,140,': M A N A D O'],[1435,950,363,'Guru-SMTP-pada-SMP-Negeri.... . . .'],[1435,974,100,'Molompar :'],[1543,973,94,'SIDIDIKAN'],[1435,1000,332,'Ybs.diberikan tunjangan jabatan'],[1435,1019,364,'Pendidikan sebesar Rp.15.000,-(lima'],[1435,1037,363,'belas ribu rupiah)setiap bulan se-'],[1560,1053,185,'bulan 30 tahun 1985']];
function put(id,rows,tilt){for(const [x,y,w,s] of rows){const t=document.createElementNS(ns,'text');t.setAttribute('x',x);t.setAttribute('y',y);t.setAttribute('textLength',w);t.setAttribute('lengthAdjust','spacingAndGlyphs');t.setAttribute('transform',`rotate(${tilt} ${x} ${y})`);t.style.whiteSpace='pre';t.textContent=s;document.getElementById(id).append(t);}}
put('labels',labels,-.2);put('typed',typed,-.8);
// dust on the photocopy, in clusters: x, y, width, height, count
let seed=7;const rnd=()=>(seed=(seed*16807)%2147483647)/2147483647;
for(const [x,y,w,h,n] of [[1040,602,40,10,8],[1092,603,60,8,10],[1180,630,45,16,12],[1395,540,100,5,8],[1430,582,70,8,10],[1170,717,85,8,26],[1170,752,80,6,9],[1040,777,36,6,10],[1180,797,60,12,12],[1330,702,80,8,10],[1350,840,40,6,5],[1195,860,45,3,6],[1434,917,60,5,12],[1520,916,110,5,12],[1590,658,130,6,18],[1790,628,18,6,5],[1600,664,75,8,14],[1430,425,70,8,6],[1640,964,150,10,44],[1740,940,56,5,8],[1430,952,60,4,6],[1475,775,20,14,8],[1100,420,260,200,10],[1100,620,700,400,45],[1440,340,370,280,20]])
 for(let i=0;i<n;i++){const r=document.createElementNS(ns,'rect');r.setAttribute('x',x+rnd()*w);r.setAttribute('y',y+rnd()*h);r.setAttribute('width',1+rnd()*1.3);r.setAttribute('height',1+rnd()*2.600);document.getElementById('specks').append(r);}
for(const e of document.querySelectorAll('[data-w]')){const r=document.createRange();r.selectNodeContents(e);const w=r.getBoundingClientRect().width;e.style.letterSpacing=((+e.dataset.w-w)/e.textContent.length)+'px';}
</script>
</body>
</html>
